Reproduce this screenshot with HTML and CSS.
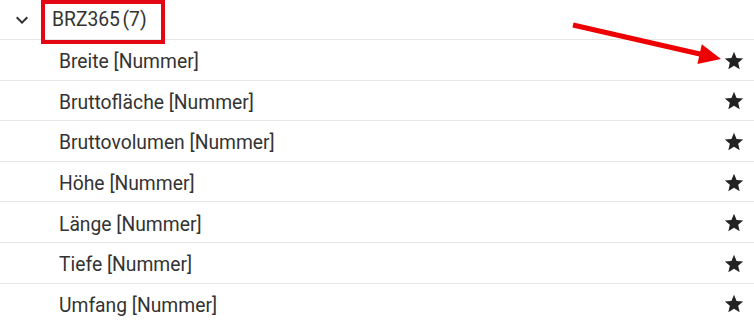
FILE: index.html
```html
<!DOCTYPE html>
<html lang="de">
<head>
<meta charset="utf-8">
<title>BRZ365</title>
<link rel="stylesheet" href="styles.css">
</head>
<body>
<div class="tree">
  <div class="group-row">
    <svg class="chevron" viewBox="0 0 24 24" width="24" height="24"><path d="M16.59 8.59L12 13.17 7.41 8.59 6 10l6 6 6-6z"/></svg>
    <span class="group-label">BRZ365<span class="count">(7)</span></span>
  </div>
  <div class="item-row"><span class="item-label">Breite [Nummer]</span><svg class="star" viewBox="0 0 24 24"><path d="M12 17.27L18.18 21l-1.64-7.03L22 9.24l-7.19-.61L12 2 9.19 8.63 2 9.24l5.46 4.73L5.82 21z"/></svg></div>
  <div class="item-row"><span class="item-label">Bruttofläche [Nummer]</span><svg class="star" viewBox="0 0 24 24"><path d="M12 17.27L18.18 21l-1.64-7.03L22 9.24l-7.19-.61L12 2 9.19 8.63 2 9.24l5.46 4.73L5.82 21z"/></svg></div>
  <div class="item-row"><span class="item-label">Bruttovolumen [Nummer]</span><svg class="star" viewBox="0 0 24 24"><path d="M12 17.27L18.18 21l-1.64-7.03L22 9.24l-7.19-.61L12 2 9.19 8.63 2 9.24l5.46 4.73L5.82 21z"/></svg></div>
  <div class="item-row"><span class="item-label">Höhe [Nummer]</span><svg class="star" viewBox="0 0 24 24"><path d="M12 17.27L18.18 21l-1.64-7.03L22 9.24l-7.19-.61L12 2 9.19 8.63 2 9.24l5.46 4.73L5.82 21z"/></svg></div>
  <div class="item-row"><span class="item-label">Länge [Nummer]</span><svg class="star" viewBox="0 0 24 24"><path d="M12 17.27L18.18 21l-1.64-7.03L22 9.24l-7.19-.61L12 2 9.19 8.63 2 9.24l5.46 4.73L5.82 21z"/></svg></div>
  <div class="item-row"><span class="item-label">Tiefe [Nummer]</span><svg class="star" viewBox="0 0 24 24"><path d="M12 17.27L18.18 21l-1.64-7.03L22 9.24l-7.19-.61L12 2 9.19 8.63 2 9.24l5.46 4.73L5.82 21z"/></svg></div>
  <div class="item-row"><span class="item-label">Umfang [Nummer]</span><svg class="star" viewBox="0 0 24 24"><path d="M12 17.27L18.18 21l-1.64-7.03L22 9.24l-7.19-.61L12 2 9.19 8.63 2 9.24l5.46 4.73L5.82 21z"/></svg></div>
</div>
<div class="highlight-box"></div>
<svg class="annotation" viewBox="0 0 754 323" width="754" height="323">
  <line x1="573" y1="25" x2="702" y2="54.5" stroke="#ee0000" stroke-width="5"/>
  <polygon points="721,59 697.4,64 701.8,44.2" fill="#ee0000"/>
</svg>
</body>
</html>
```

FILE: styles.css
```css
html, body {
  margin: 0;
  padding: 0;
  background: #ffffff;
}

body {
  width: 754px;
  height: 323px;
  overflow: hidden;
  position: relative;
  font-family: Roboto, "Liberation Sans", Arial, sans-serif;
  color: #333333;
}

.tree {
  display: flex;
  flex-direction: column;
}

.group-row {
  display: flex;
  align-items: center;
  height: 39px;
  border-bottom: 1px solid #e6e6e6;
  padding-left: 10px;
  gap: 18px;
}

.chevron {
  width: 24px;
  height: 24px;
  fill: #333333;
  flex: none;
}

.group-label {
  font-size: 19.3px;
  line-height: 1;
  padding-top: 1px;
}

.count {
  margin-left: 2.5px;
}

.item-row {
  display: flex;
  align-items: center;
  justify-content: space-between;
  height: 39.6px;
  border-bottom: 1px solid #e6e6e6;
  padding-left: 59px;
  padding-right: 9px;
}

.item-label {
  font-size: 19.3px;
  line-height: 1;
  padding-top: 4px;
}

.star {
  width: 22px;
  height: 22px;
  fill: #222222;
  flex: none;
  margin-top: 2px;
}

.highlight-box {
  position: absolute;
  left: 41px;
  top: 0;
  width: 116px;
  height: 36px;
  border: 4px solid #e30613;
}

.annotation {
  position: absolute;
  left: 0;
  top: 0;
  pointer-events: none;
}
```
